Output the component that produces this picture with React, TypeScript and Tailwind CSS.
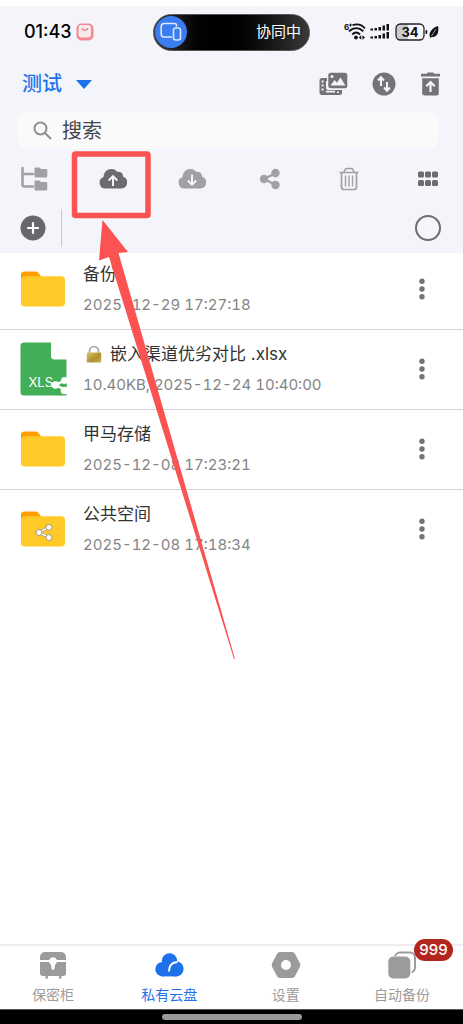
import { useState } from "react";

type FileItem = {
  name: string;
  info: string;
  kind: "folder" | "shared" | "xls";
  locked?: boolean;
};

const files: FileItem[] = [
  { name: "备份", info: "2025-12-29 17:27:18", kind: "folder" },
  { name: "嵌入渠道优劣对比 .xlsx", info: "10.40KB, 2025-12-24 10:40:00", kind: "xls", locked: true },
  { name: "甲马存储", info: "2025-12-08 17:23:21", kind: "folder" },
  { name: "公共空间", info: "2025-12-08 17:18:34", kind: "shared" },
];

function StatusBar() {
  return (
    <div className="flex h-[52px] items-center px-6">
      <div className="flex flex-1 items-center gap-1">
        <span className="text-lg font-medium text-black">01:43</span>
        <svg width="18" height="18" viewBox="0 0 18 18">
          <rect x="0.5" y="0.5" width="17" height="17" rx="5" fill="#f28a92" />
          <rect x="2.5" y="2" width="12.5" height="12.5" rx="3" fill="#fbe9ea" />
          <path d="M6 5.5c.8 2.6 4.800 2.600 5.600 0" fill="none" stroke="#e8808a" strokeWidth="1.300" strokeLinecap="round" />
        </svg>
      </div>
      <div className="flex h-[37px] w-[157px] items-center justify-between rounded-full border border-[#555] bg-linear-to-r from-[#3a3a3a] via-black via-40% to-[#3a3a3a] pr-2 pl-px">
        <span className="flex size-8 items-center justify-center rounded-full bg-[#3b7cf0]">
          <svg width="22" height="20" viewBox="0 0 22 20" fill="none" stroke="#dbe8ff" strokeWidth="1.600">
            <path d="M11.500 15H4.200A3 3 0 0 1 1.200 12V4.500a3 3 0 0 1 3-3h10.300a2 2 0 0 1 2 2V4" strokeLinecap="round" />
            <rect x="13.500" y="6" width="7" height="12" rx="2.200" />
          </svg>
        </span>
        <span className="text-[15px] text-white">协同中</span>
      </div>
      <div className="flex flex-1 items-center justify-end">
        <svg width="95" height="20" viewBox="0 0 95 20" fill="#111">
          <text x="0" y="8" fontSize="8" fontWeight="700">6</text>
          <path d="M5 3h3M6.500 1.500v3" stroke="#111" strokeWidth="0.900" />
          <g fill="none" stroke="#111" strokeWidth="1.900">
            <path d="M8.500 3.200C13 1.600 18 3 21 6.500" />
            <path d="M5 9.300C9.500 5.200 15 5.200 19.300 9.300" />
            <path d="M8.200 12.500c2.400-2.300 5.500-2.300 7.800 0" />
          </g>
          <circle cx="12" cy="15.500" r="1.900" />
          <path d="m14.800 15.500 2.500-2.200v4.400zM21 15.500l-2.500-2.200v4.400z" />
          <path d="M26.500 6.500H29v2h-2.500zM30.500 6H33v2.500h-2.500zM34.500 5H37v3.500h-2.500zM38.500 3.500H41v5h-2.500zM42.500 2H45v6.500h-2.500z" />
          <path d="M26.500 14.500H29v2h-2.500zM30.500 14H33v2.500h-2.500zM34.500 13H37v3.500h-2.500zM38.500 11.500H41v5h-2.500zM42.500 10H45v6.500h-2.500z" />
          <rect x="52" y="2" width="28" height="16" rx="4.500" fill="#f7f8fa" />
          <path d="M56 2h8v16h-8a4 4 0 0 1-4-4V6a4 4 0 0 1 4-4z" fill="#c9cbce" />
          <rect x="52" y="2" width="28" height="16" rx="4.500" fill="none" stroke="#222" strokeWidth="1.300" />
          <text x="66" y="14.800" fontSize="13" fontWeight="700" textAnchor="middle">34</text>
          <rect x="81.500" y="8" width="1.800" height="4" rx="0.900" />
          <path d="M94 4c1 5 0 10-4.500 11h-2L86.500 16l-.6-1.300c-1.500-4 2.600-9.200 8.100-10.700z" />
          <path d="M92 7 87.500 14" stroke="#f3f5fa" strokeWidth="0.600" />
        </svg>
      </div>
    </div>
  );
}

function MediaIcon() {
  return (
    <svg width="29" height="24" viewBox="0 0 29 24">
      <path d="M3 6h5v17H3a2.500 2.500 0 0 1-2.500-2.500v-12A2.500 2.500 0 0 1 3 6z" fill="#737477" />
      <path d="M6 18h17v2.500a2.500 2.500 0 0 1-2.500 2.500H6z" fill="#737477" />
      <path d="M2.600 8.500h2v2h-2zM2.600 12.500h2v2h-2zM2.600 16.500h2v2h-2zM7 9h1.600v8H7zM7 18.700h9v1.800H7zM18 19.500h2v1.500h-2z" fill="#f3f5fa" />
      <rect x="8.500" y="0" width="20.500" height="17.500" rx="3.500" fill="#f3f5fa" />
      <rect x="9.300" y="0.800" width="19" height="15.500" rx="2.500" fill="#737477" />
      <circle cx="13" cy="4.500" r="1.500" fill="#f3f5fa" />
      <path d="m11.500 13.500 4-5.500 2.400 2.700L21.500 5.500l4.800 8z" fill="#f3f5fa" />
    </svg>
  );
}

function TransferIcon() {
  return (
    <svg width="24" height="24" viewBox="0 0 24 24">
      <circle cx="12" cy="12" r="11.500" fill="#737477" />
      <path d="M9 14V5.500M6 8.500l3-3.200 3 3.200M15 10v8.500M12 15.500l3 3.200 3-3.200" fill="none" stroke="#f3f5fa" strokeWidth="2" />
    </svg>
  );
}

function RestoreIcon() {
  return (
    <svg width="21" height="24" viewBox="0 0 21 24">
      <path d="M1 1.800h5.500L8 .5h5l1.500 1.300H20v2.700H1zM2.200 6.200h16.600V21a2.500 2.500 0 0 1-2.500 2.500H4.700A2.500 2.500 0 0 1 2.200 21z" fill="#737477" />
      <path d="M10.500 20v-9.500M6.300 14.300l4.200-4.300 4.200 4.300" fill="none" stroke="#f3f5fa" strokeWidth="2.200" />
    </svg>
  );
}

function TreeIcon() {
  return (
    <svg width="28" height="26" viewBox="0 0 28 26">
      <path d="M2.500 2v16.500a2 2 0 0 0 2 2H13M2.500 8H13" fill="none" stroke="#a0a1a5" strokeWidth="2.600" strokeLinecap="round" />
      <path d="M14.500 2.500a1 1 0 0 1 1-1h4l1.500 1.500h5a1.300 1.300 0 0 1 1.300 1.300v6a1.300 1.300 0 0 1-1.300 1.300H16a1.500 1.500 0 0 1-1.500-1.500zM14.500 15.500a1 1 0 0 1 1-1h4L21 16h5a1.300 1.300 0 0 1 1.300 1.300v6a1.300 1.300 0 0 1-1.300 1.300H16a1.500 1.500 0 0 1-1.500-1.500z" fill="#a0a1a5" />
    </svg>
  );
}

function CloudIcon({ up }: { up?: boolean }) {
  return (
    <svg width="28" height="22" viewBox="0 0 28 22">
      <path
        d="M6.200 20.500A6 6 0 0 1 4.500 8.900C5 4 8 1 12.300 1c2.500 0 4.700 1 6 2.900 3.300-.6 6 1.600 5.700 4.700a6.100 6.100 0 0 1-1.700 11.900z"
        fill={up ? "#6b6c6f" : "#a0a1a5"}
      />
      <path
        d={up ? "M14 18V8.500M9.700 12.500 14 8.200l4.300 4.300" : "M14 6.500V16M9.700 12.500 14 16.700l4.300-4.200"}
        fill="none"
        stroke="#f3f5fa"
        strokeWidth="2"
      />
    </svg>
  );
}

function ShareIcon() {
  return (
    <svg width="28" height="22" viewBox="0 0 28 22" fill="#a0a1a5">
      <path d="M20 5 8 11l12 6" fill="none" stroke="#a0a1a5" strokeWidth="2.500" />
      <circle cx="8" cy="11" r="4.200" />
      <circle cx="19.500" cy="5" r="4.200" />
      <circle cx="19.500" cy="17" r="4.200" />
    </svg>
  );
}

function TrashIcon() {
  return (
    <svg width="28" height="24" viewBox="0 0 28 24" fill="none" stroke="#a0a1a5" strokeWidth="1.700">
      <path d="M4.500 5.500h19M6.500 5.500V20a2.500 2.500 0 0 0 2.500 2.500h10a2.500 2.500 0 0 0 2.500-2.500V5.500M9 5.500c.5-3 1.500-4 3-4h4c1.500 0 2.500 1 3 4" />
      <path d="M10.500 8.500v11M14 8.500v11M17.500 8.500v11" strokeWidth="1.400" />
    </svg>
  );
}

function GridIcon() {
  return (
    <svg width="28" height="18" viewBox="0 0 28 18" fill="#6b6c6f">
      {[4, 11, 18].map((x) => (
        <g key={x}>
          <rect x={x} y="1.500" width="6" height="6" rx="1.500" />
          <rect x={x} y="10" width="6" height="6" rx="1.500" />
        </g>
      ))}
    </svg>
  );
}

function FolderIcon({ shared }: { shared?: boolean }) {
  return (
    <svg width="46" height="36" viewBox="0 0 46 36">
      <path d="M1 14V4a3.500 3.500 0 0 1 3.500-3.500h11c1.500 0 2.300.6 3 1.500l3 4L21 14z" fill="#ffa000" />
      <rect x="1" y="5.200" width="44" height="30.300" rx="3.800" fill="#ffca28" />
      {shared && (
        <g fill="#fff" stroke="#a59a7c" strokeWidth="1">
          <path d="m29.500 16-11 5.500 11 5" fill="none" strokeWidth="3" />
          <path d="m29.500 16-11 5.500 11 5" fill="none" stroke="#fff" strokeWidth="1.400" />
          <circle cx="19" cy="21.500" r="3" />
          <circle cx="29" cy="16.300" r="3" />
          <circle cx="29" cy="26.500" r="3" />
        </g>
      )}
    </svg>
  );
}

function XlsIcon() {
  return (
    <svg width="48" height="54" viewBox="0 0 48 54">
      <path d="M4 .5h27V14a3.500 3.500 0 0 0 3.500 3.500H46.500V53.500H4A3.500 3.500 0 0 1 .5 50V4A3.500 3.500 0 0 1 4 .5z" fill="#43ae58" />
      <path d="M31 .5 46.500 17.500" stroke="#eeeeee" strokeWidth="0.800" />
      <text x="8.500" y="44.500" fontSize="13" fill="#fff">XLS</text>
      <g fill="#fff">
        <path d="M46 37.500 36 43l11 6" fill="none" stroke="#fff" strokeWidth="2.500" />
        <circle cx="35.500" cy="43" r="3.800" />
        <circle cx="44.500" cy="38.500" r="3.500" />
        <circle cx="44.500" cy="48.500" r="3.800" />
      </g>
      <path d="m39.500 43.200 7-1.700v3.400z" fill="#43ae58" />
    </svg>
  );
}

function LockIcon() {
  return (
    <svg width="16" height="18" viewBox="0 0 16 18">
      <defs>
        <linearGradient id="brass" x1="0" y1="0" x2="1" y2="1">
          <stop offset="0" stopColor="#d8c66a" />
          <stop offset="0.600" stopColor="#ad8f30" />
          <stop offset="1" stopColor="#c9b356" />
        </linearGradient>
      </defs>
      <path d="M3.500 9V6a4.500 4.500 0 0 1 9 0v3" fill="none" stroke="#a9a99b" strokeWidth="1.700" />
      <rect x="0.800" y="7.500" width="14.400" height="10" rx="1" fill="url(#brass)" />
    </svg>
  );
}

function FileRow({ file }: { file: FileItem }) {
  return (
    <li className="flex items-center gap-[15px] border-b border-[#d3d2dc] pt-2 pr-[29px] pb-[9px] pl-5 first:pt-[5px] last:border-transparent">
      <div className="flex w-12 shrink-0">
        {file.kind === "xls" ? <XlsIcon /> : <FolderIcon shared={file.kind === "shared"} />}
      </div>
      <div className="min-w-0 flex-1">
        <div className="flex items-center gap-2 text-[17px] leading-8 text-[#333]">
          {file.locked && (
            <span className="pl-[3px]">
              <LockIcon />
            </span>
          )}
          <span className="truncate">{file.name}</span>
        </div>
        <div className="text-[15px] leading-[30px] text-[#848486] tabular-nums">{file.info}</div>
      </div>
      <button type="button" aria-label="更多" className="w-6 shrink-0">
        <svg className="mx-auto" width="6" height="22" viewBox="0 0 6 22" fill="#737477">
          <circle cx="3" cy="3.300" r="2.700" />
          <circle cx="3" cy="11" r="2.700" />
          <circle cx="3" cy="18.700" r="2.700" />
        </svg>
      </button>
    </li>
  );
}

const tabs = [
  {
    label: "保密柜",
    icon: (
      <svg width="28" height="28" viewBox="0 0 28 28" fill="#9b9b9b">
        <path d="M6 1h16a5 5 0 0 1 5 5v3H1V6a5 5 0 0 1 5-5z" />
        <path d="M1 11h26v11a3 3 0 0 1-3 3h-1.500v1.500a1.200 1.200 0 0 1-2.500 0V25H9v1.500a1.200 1.200 0 0 1-2.500 0V25H4a3 3 0 0 1-3-3z" />
        <path d="M14 6.200a4 4 0 0 1 2.200 7.300l-1 5.200h-2.400l-1-5.200A4 4 0 0 1 14 6.200z" fill="#fff" />
      </svg>
    ),
  },
  {
    label: "私有云盘",
    icon: (
      <svg width="30" height="28" viewBox="0 0 30 28">
        <g fill="#1d72ec">
          <circle cx="15.500" cy="10" r="7.700" />
          <circle cx="8.500" cy="18.200" r="7.200" />
          <circle cx="22" cy="17.800" r="7.600" />
          <rect x="8" y="12" width="14.500" height="13.400" />
        </g>
        <path d="M15 20.500c0-5.500 3-9.200 8.500-9.500" fill="none" stroke="#fff" strokeWidth="2" />
      </svg>
    ),
  },
  {
    label: "设置",
    icon: (
      <svg width="30" height="28" viewBox="0 0 30 28">
        <path
          fillRule="evenodd"
          d="M8.800 1h12.400a3 3 0 0 1 2.600 1.500l5 9.500a4 4 0 0 1 0 4l-5 9.500a3 3 0 0 1-2.600 1.500H8.800a3 3 0 0 1-2.600-1.500l-5-9.500a4 4 0 0 1 0-4l5-9.500A3 3 0 0 1 8.800 1zM15 9a5 5 0 1 0 0 10 5 5 0 0 0 0-10z"
          fill="#9b9b9b"
        />
      </svg>
    ),
  },
  {
    label: "自动备份",
    badge: 999,
    icon: (
      <svg width="28" height="28" viewBox="0 0 28 28">
        <rect x="7" y="1.500" width="20" height="20" rx="5" fill="none" stroke="#9b9b9b" strokeWidth="2" />
        <rect x="0" y="5" width="23.500" height="23.500" rx="5.500" fill="#fff" />
        <rect x="0.300" y="5.500" width="22" height="22" rx="5" fill="#9b9b9b" />
      </svg>
    ),
  },
];

export default function App() {
  const [query, setQuery] = useState("");
  const [active, setActive] = useState("私有云盘");

  return (
    <div className="relative flex min-h-screen flex-col bg-white font-['Inter','Noto_Sans_CJK_SC',sans-serif]">
      <header className="mt-1.5 bg-[#f3f5fa] pb-1.5">
        <StatusBar />
        <div className="flex h-[52px] items-center justify-between px-[22px]">
          <button type="button" className="flex items-center gap-3.5 text-xl font-medium text-[#1d72ec]">
            测试
            <svg width="16" height="9" viewBox="0 0 16 9">
              <path d="M0 0h16L8 9z" fill="#1d72ec" />
            </svg>
          </button>
          <div className="flex items-center gap-6">
            <button type="button" aria-label="相册"><MediaIcon /></button>
            <button type="button" aria-label="传输"><TransferIcon /></button>
            <button type="button" aria-label="回收站"><RestoreIcon /></button>
          </div>
        </div>
        <label className="mt-0.5 mr-6 ml-[17px] flex h-[37px] items-center gap-2.5 rounded-xl bg-[#fafafa] pl-4">
          <svg width="19" height="19" viewBox="0 0 19 19" fill="none" stroke="#8f8f93" strokeWidth="2">
            <circle cx="7.500" cy="7.500" r="6" />
            <path d="m12 12 6 6" />
          </svg>
          <input
            type="text"
            aria-label="搜索"
            placeholder="搜索"
            value={query}
            onChange={(e) => setQuery(e.target.value)}
            className="min-w-0 flex-1 bg-transparent text-xl leading-6 text-[#46464c] outline-none placeholder:text-[#46464c]"
          />
        </label>
        <div className="flex h-[60px] items-center justify-between pr-[21px] pl-5">
          <button type="button" aria-label="目录"><TreeIcon /></button>
          <button type="button" aria-label="上传"><CloudIcon up /></button>
          <button type="button" aria-label="下载"><CloudIcon /></button>
          <button type="button" aria-label="分享"><ShareIcon /></button>
          <button type="button" aria-label="删除"><TrashIcon /></button>
          <button type="button" aria-label="网格"><GridIcon /></button>
        </div>
        <div className="flex items-center justify-between pr-[22px] pl-5">
          <div className="flex h-[38px] items-center gap-[15px]">
            <button type="button" aria-label="新建">
              <svg width="26" height="26" viewBox="0 0 26 26">
                <circle cx="13" cy="13" r="12.500" fill="#67686b" />
                <path d="M13 8v10M8 13h10" stroke="#fff" strokeWidth="2.200" strokeLinecap="round" />
              </svg>
            </button>
            <span className="h-full w-px bg-[#c9c6d0]" />
          </div>
          <input type="checkbox" aria-label="全选" className="size-[26px] appearance-none rounded-full border-2 border-[#6b6c6f] checked:bg-[#1d72ec]" />
        </div>
      </header>

      <ul className="flex-1">
        {files.map((file) => (
          <FileRow key={file.name} file={file} />
        ))}
      </ul>

      <nav className="flex h-[65px] justify-between border-t-2 border-[#ededf2] pt-[5px] pr-[33px] pl-[25px]">
        {tabs.map((tab) => (
          <button
            key={tab.label}
            type="button"
            onClick={() => setActive(tab.label)}
            className={`relative flex w-14 flex-col items-center gap-1.5 text-sm whitespace-nowrap ${
              active === tab.label ? "text-[#1d72ec]" : "text-[#9b9b9b]"
            }`}
          >
            {tab.icon}
            <span className="leading-5">{tab.label}</span>
            {tab.badge && (
              <span className="absolute -top-3 left-10 flex h-[22px] w-[39px] items-center justify-center rounded-full bg-[#b3261e] text-[15px] font-medium text-white">
                {tab.badge}
              </span>
            )}
          </button>
        ))}
      </nav>
      <div className="flex h-[15px] items-center justify-center border-t border-[#555] bg-black">
        <span className="h-1.5 w-[140px] rounded-full bg-[#999]" />
      </div>

      {/* callout pointing at the upload button */}
      <svg className="pointer-events-none absolute top-0 left-0" width="240" height="665" viewBox="0 0 240 665">
        <rect x="74.500" y="154" width="73.500" height="61.500" rx="1" fill="none" stroke="#fb5252" strokeWidth="5.500" />
        <path d="M102.500 220 128 252l-9.500 1L235 659h-1L109 257l-10 3.500z" fill="#fb5252" />
      </svg>
    </div>
  );
}
